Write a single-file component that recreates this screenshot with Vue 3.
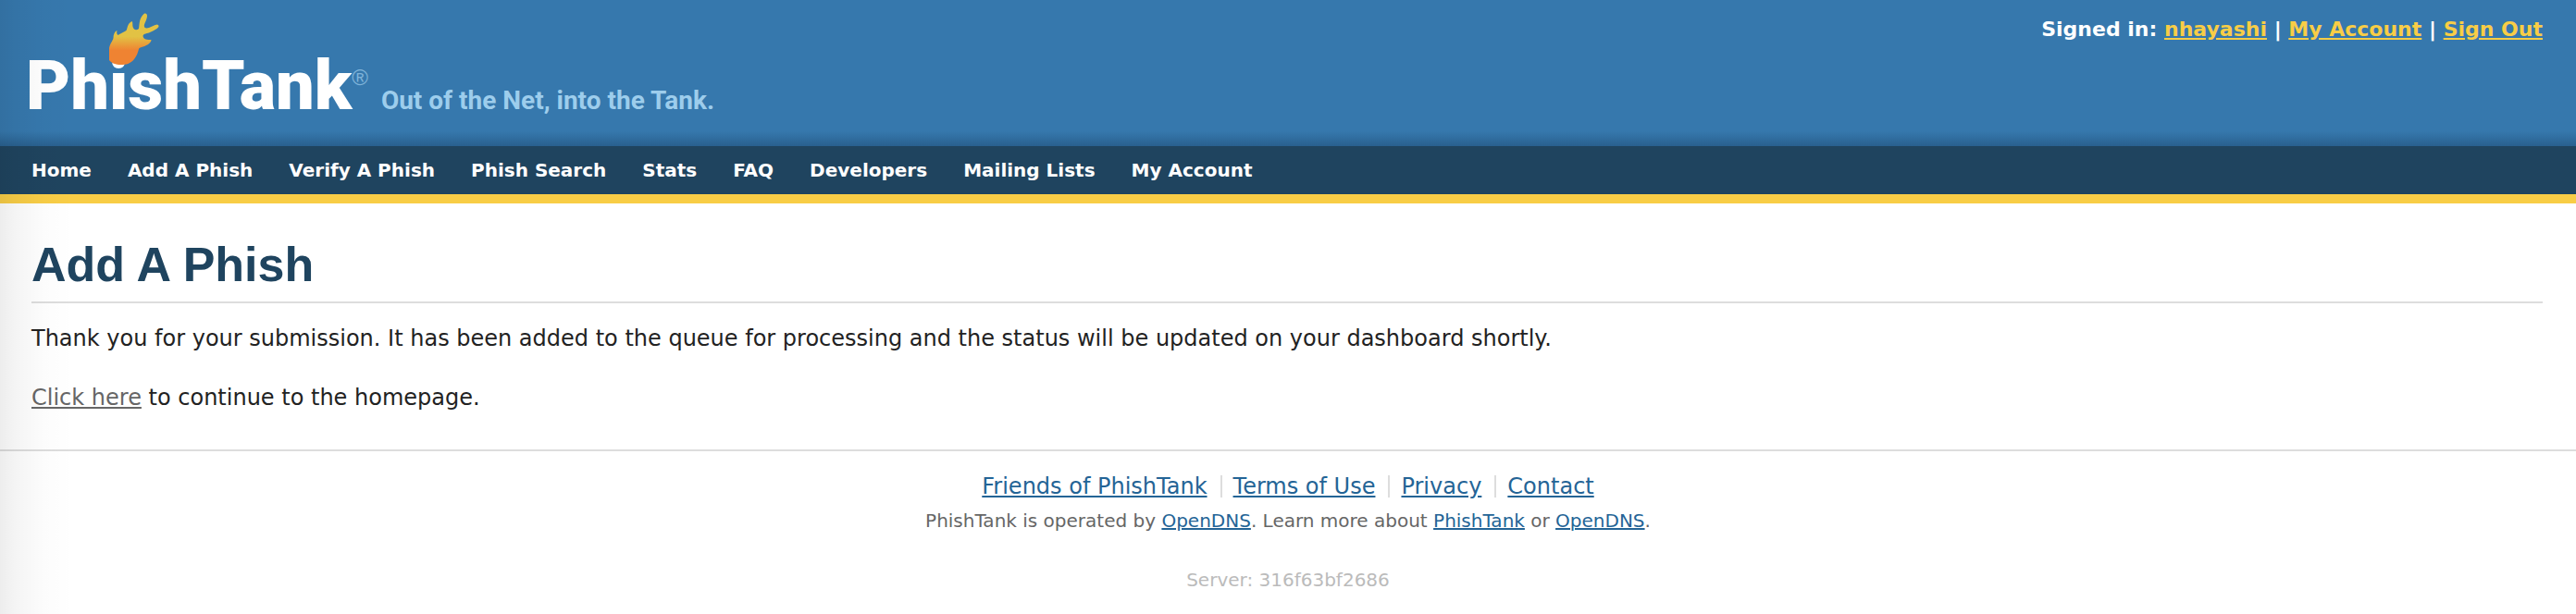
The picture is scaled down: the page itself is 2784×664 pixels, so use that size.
<script setup>
const accountLinks = ['nhayashi', 'My Account', 'Sign Out']
const navLinks = [
  'Home', 'Add A Phish', 'Verify A Phish', 'Phish Search', 'Stats',
  'FAQ', 'Developers', 'Mailing Lists', 'My Account',
]
const footerLinks = ['Friends of PhishTank', 'Terms of Use', 'Privacy', 'Contact']
</script>

<template>
  <div class="page">
    <header class="banner">
      <a class="logo" href="#">
        <span class="wordmark">PhishTank</span>
        <svg class="fish" viewBox="0 0 56 56" width="56" height="56" aria-hidden="true">
          <defs>
            <linearGradient id="flame" x1="0" y1="0" x2="0" y2="1">
              <stop offset="0.45" stop-color="#e2c244" />
              <stop offset="0.72" stop-color="#ef8332" />
            </linearGradient>
          </defs>
          <path
            fill="url(#flame)"
            d="M1 51 V38 C2 33 5 30 5.500 27 C5.500 23 7 20 9.500 19 C9 21 9 23 10.500 24 C13 22 17 21 19.500 19 C21 17 20 12 25.500 9 C27 10 25.500 14 27.500 17 Q30 19.500 33 17 C34 12 33 6 38.500 1 C40.500 0 42 1 42 3 C42 8 38 12 39 15 C40 17 42 16.500 44 16 C47 15 50 13 53 12.500 Q55 13 54.500 15 C52 18 49 19 46 20.500 C42 22.500 38 22 37.500 25 C38 29 42 29 46.500 29 C46.500 33 40 36 36 37 C34 37.500 33.500 38 33 39 C32 43 30.500 47 28 50 C24 55 19 56 14 56 C8 56 3 54 1 51 Z"
          />
        </svg>
        <span class="mark">®</span>
      </a>
      <span class="tagline">Out of the Net, into the Tank.</span>
      <div class="account">
        Signed in:
        <template v-for="(link, i) in accountLinks" :key="link">
          <template v-if="i"> | </template><a href="#">{{ link }}</a>
        </template>
      </div>
    </header>
    <nav class="menu">
      <a v-for="link in navLinks" :key="link" href="#">{{ link }}</a>
    </nav>
    <main class="content">
      <h1>Add A Phish</h1>
      <p>Thank you for your submission. It has been added to the queue for processing and the status will be updated on your dashboard shortly.</p>
      <p><a href="#">Click here</a> to continue to the homepage.</p>
    </main>
    <footer class="footer">
      <ul>
        <li v-for="link in footerLinks" :key="link"><a href="#">{{ link }}</a></li>
      </ul>
      <p>PhishTank is operated by <a href="#">OpenDNS</a>. Learn more about <a href="#">PhishTank</a> or <a href="#">OpenDNS</a>.</p>
      <p class="server">Server: 316f63bf2686</p>
    </footer>
  </div>
</template>

<style>
body {
  margin: 0;
  background: #fff;
}
</style>

<style scoped>
.page {
  position: relative;
  min-height: 100vh;
  font-family: Verdana, "DejaVu Sans", sans-serif;
  font-size: 24px;
  line-height: 32px;
  color: #222;
}
.page::after {
  content: "";
  position: absolute;
  inset: 0 auto 0 0;
  width: 80px;
  background: linear-gradient(to right, rgba(0, 0, 0, 0.07), rgba(0, 0, 0, 0.045) 20%, rgba(0, 0, 0, 0.01) 60%, transparent);
  pointer-events: none;
}
.banner {
  display: flex;
  align-items: flex-end;
  box-sizing: border-box;
  min-height: 158px;
  padding: 16px 36px 29px 28px;
  background: linear-gradient(to top, #29608f, #3678ad 16px);
}
.logo {
  position: relative;
  display: flex;
  align-items: flex-start;
  color: #fff;
  text-decoration: none;
}
.wordmark {
  font: 900 74px/72px Roboto, sans-serif;
}
.mark {
  margin-top: 15px;
  font: 24px/24px "Liberation Sans", sans-serif;
  color: #7fb3d9;
}
.fish {
  position: absolute;
  left: 89px;
  bottom: 59px;
}
.tagline {
  margin-left: 14px;
  font: bold 28px/40px Roboto, sans-serif;
  color: #9dcdec;
}
.account {
  align-self: flex-start;
  margin-left: auto;
  font-size: 22px;
  font-weight: bold;
  color: #fff;
}
.account a {
  color: #f8cd46;
}
.menu {
  display: flex;
  flex-wrap: wrap;
  gap: 0 39px;
  padding: 10px 34px;
  background: #1f445f;
  border-bottom: 10px solid #f8cd46;
}
.menu a {
  font-size: 20px;
  font-weight: bold;
  color: #fff;
  text-decoration: none;
}
.content {
  padding: 34px 36px 40px 34px;
}
h1 {
  margin: 0 0 22px;
  padding-bottom: 8px;
  border-bottom: 2px solid #ddd;
  font: bold 52px/64px "Liberation Sans", Arial, sans-serif;
  color: #1f445f;
}
.content p {
  margin: 0 0 32px;
}
.content p:last-child {
  margin: 0;
}
.content a {
  color: #666;
}
.footer {
  padding-top: 22px;
  border-top: 2px solid #ddd;
  font-size: 20px;
  text-align: center;
  color: #666;
}
.footer ul {
  display: flex;
  justify-content: center;
  margin: 0 0 5px;
  padding: 0;
  list-style: none;
  font-size: 24px;
}
.footer li + li {
  margin-left: 14px;
  padding-left: 14px;
  background: linear-gradient(#ddd, #ddd) left center / 2px 24px no-repeat;
}
.footer a {
  color: #246496;
}
.footer p {
  margin: 0;
}
.footer .server {
  margin-top: 32px;
  color: #bbb;
}
</style>
